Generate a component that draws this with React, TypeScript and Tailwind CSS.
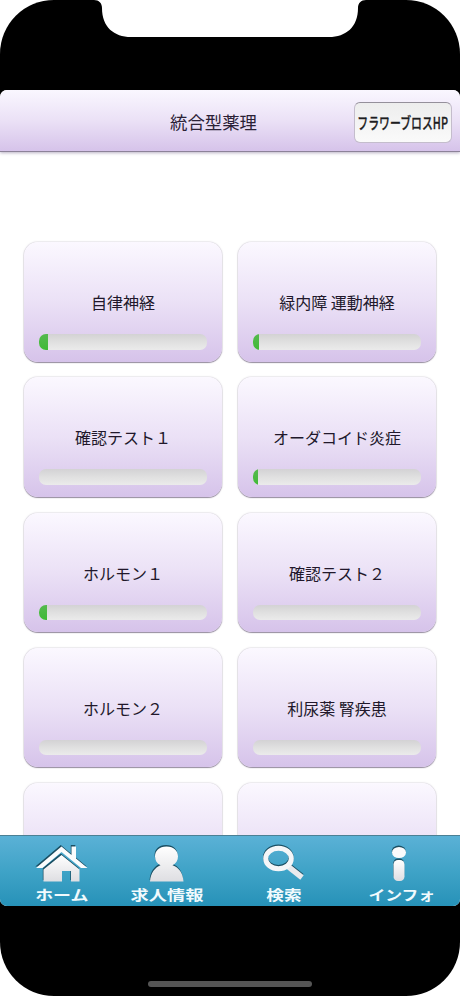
import React from "react";

interface Lesson {
  id: number;
  title: string;
  progress: number;
}

const lessons: Lesson[] = [
  { id: 1, title: "自律神経", progress: 5.2 },
  { id: 2, title: "緑内障 運動神経", progress: 3.6 },
  { id: 3, title: "確認テスト１", progress: 0 },
  { id: 4, title: "オーダコイド炎症", progress: 3 },
  { id: 5, title: "ホルモン１", progress: 5 },
  { id: 6, title: "確認テスト２", progress: 0 },
  { id: 7, title: "ホルモン２", progress: 0 },
  { id: 8, title: "利尿薬 腎疾患", progress: 0 },
  { id: 9, title: "", progress: 0 },
  { id: 10, title: "", progress: 0 },
];

const SHADE = "#1b4f63";

const IconGradient = ({ id }: { id: string }) => (
  <defs>
    <linearGradient id={id} x1="0" y1="0" x2="0" y2="1">
      <stop offset="0" stopColor="#ffffff" />
      <stop offset="1" stopColor="#dedee2" />
    </linearGradient>
  </defs>
);

const HomeIcon = () => {
  const roof = "M1 24 L26.500 2.500 L36.500 11 V2.500 H41 V14.500 L52.500 24 H46 L26.500 8 L7.500 24 Z";
  const body = "M8.500 25.500 L26.500 11 L44.500 25.500 V37.500 H36 V27 H27 V37.500 H8.500 Z";
  return (
    <svg width="54" height="38" viewBox="0 0 54 38">
      <IconGradient id="home" />
      <g fill={SHADE} transform="translate(-0.7 -1.4)">
        <path d={roof} />
        <path d={body} />
      </g>
      <path d={roof} fill="#fafcfd" />
      <path d={body} fill="url(#home)" />
    </svg>
  );
};

const PersonIcon = () => {
  const shape =
    "M17.500 2.500 C25 2.500 29 7 29 12.500 C29 16.500 27 19.500 23.500 21.200 C30 23.500 34 29 34.500 37.500 H1 C1.500 29 6 23.500 11.500 21.200 C8 19.500 6 16.500 6 12.500 C6 7 10 2.500 17.500 2.500 Z";
  return (
    <svg width="36" height="38" viewBox="0 0 36 38">
      <IconGradient id="person" />
      <path d={shape} fill={SHADE} transform="translate(-0.4 -1.4)" />
      <path d={shape} fill="url(#person)" />
    </svg>
  );
};

const SearchIcon = () => (
  <svg width="44" height="38" viewBox="0 0 44 38">
    <g fill="none" stroke={SHADE} transform="translate(-0.2 -1.3)">
      <ellipse cx="16.500" cy="14.500" rx="12.800" ry="10.300" strokeWidth="5" />
      <path d="M25.500 22 L40 33.500" strokeWidth="5.500" />
    </g>
    <g fill="none">
      <path d="M25.500 22 L40 33.500" stroke="#e9eaed" strokeWidth="5.500" />
      <ellipse cx="16.500" cy="14.500" rx="12.800" ry="10.300" stroke="#f5f6f8" strokeWidth="5" />
    </g>
  </svg>
);

const InfoIcon = () => (
  <svg width="18" height="38" viewBox="0 0 18 38" className="relative right-[3px]">
    <IconGradient id="info" />
    <g fill={SHADE} transform="translate(-0.3 -1.4)">
      <ellipse cx="9" cy="8.500" rx="7" ry="5.500" />
      <rect x="3.500" y="16" width="11" height="21" rx="4.500" />
    </g>
    <ellipse cx="9" cy="8.500" rx="7" ry="5.500" fill="#fafbfc" />
    <rect x="3.500" y="16" width="11" height="21" rx="4.500" fill="url(#info)" />
  </svg>
);

const tabs = [
  { label: "ホーム", icon: <HomeIcon />, className: "ml-[34px] w-[55px]", labelClass: "scale-x-[1.28]" },
  { label: "求人情報", icon: <PersonIcon />, className: "ml-[41px] w-[74px]", labelClass: "scale-x-[1.3]" },
  { label: "検索", icon: <SearchIcon />, className: "ml-[58px] w-[44px]", labelClass: "scale-x-[1.26]" },
  { label: "インフォ", icon: <InfoIcon />, className: "ml-[60px] w-[72px]", labelClass: "scale-x-[1.2]" },
];

const LessonCard = ({ lesson }: { lesson: Lesson }) => (
  <button className="flex h-[119.500px] flex-col items-stretch rounded-[14px] bg-linear-to-b from-[#fbf8ff] via-[#ebe1f6] to-[#d6c3ea] px-[15px] pt-12 shadow-[0_1px_1px_0px_rgba(80,65,95,0.55),0_0_1.5px_0px_rgba(90,75,105,0.55)]">
    <span className="h-6 text-center text-base leading-6 whitespace-nowrap text-[#21182b]">
      {lesson.title}
    </span>
    <span className="mt-5 block h-[15.500px] overflow-hidden rounded-[7px] bg-linear-to-b from-[#d3d2d4] via-[#e0e0e0] to-[#ebebeb]">
      <span
        className="block h-full bg-linear-to-b from-[#55b94f] to-[#3fba35]"
        style={{ width: `${lesson.progress}%` }}
      />
    </span>
  </button>
);

const App: React.FC = () => {
  return (
    <div className="h-[996px] w-[460px] overflow-hidden bg-white font-['Noto_Sans_CJK_JP',sans-serif]">
      <div className="relative flex h-full flex-col overflow-hidden rounded-[54px] bg-black">
        {/* notch */}
        <svg className="absolute top-0 left-[94px]" width="272" height="38" viewBox="0 0 272 38">
          <path
            d="M0 0 C5 0 8 3 8 8 C8 27 20 37 37 37 H235 C252 37 264 27 264 8 C264 3 267 0 272 0 Z"
            fill="#fff"
          />
        </svg>

        <main className="mt-[89.500px] flex h-[816.500px] flex-col overflow-hidden rounded-[7px] bg-white">
          <header className="z-10 flex h-[62px] shrink-0 items-center justify-between border-b border-[#8d8299] bg-linear-to-b from-[#faf7ff] via-[#ebe1f6] to-[#d6c3ea] pr-2 pl-[170px] shadow-[0_1px_3px_rgba(80,60,110,0.4)]">
            <h1 className="pt-[3px] text-[17.400px] leading-6 whitespace-nowrap text-[#2b2136]">統合型薬理</h1>
            <button className="mt-1 flex h-[41px] w-[98px] items-center justify-center rounded-md border border-[#c4bdcc] border-t-[#95909b] bg-linear-to-b from-[#ededed] to-[#fafafa]">
              <span className="scale-x-[0.68] text-base font-medium whitespace-nowrap text-[#1d1d1f] [-webkit-text-stroke:0.3px_#1d1d1f]">
                フラワーブロスHP
              </span>
            </button>
          </header>

          <section className="min-h-0 flex-1 overflow-hidden px-6 pt-[90.500px]">
            <div className="grid grid-cols-2 gap-x-4 gap-y-[15.800px]">
              {lessons.map((lesson) => (
                <LessonCard key={lesson.id} lesson={lesson} />
              ))}
            </div>
          </section>

          <nav className="flex h-[71px] shrink-0 border-t border-[#4b8094] bg-linear-to-b from-[#5ab1d6] via-[#3fa3c7] to-[#2692b8] pt-2">
            {tabs.map((tab) => (
              <div key={tab.label} className={`flex shrink-0 flex-col items-center ${tab.className}`}>
                {tab.icon}
                <span
                  className={`mt-[3px] text-sm leading-[18px] font-bold whitespace-nowrap text-[#f1fafd] ${tab.labelClass}`}
                >
                  {tab.label}
                </span>
              </div>
            ))}
          </nav>
        </main>

        <div className="mt-[75px] h-1.5 w-[164px] self-center rounded-full bg-[#555]" />
      </div>
    </div>
  );
};

export default App;
